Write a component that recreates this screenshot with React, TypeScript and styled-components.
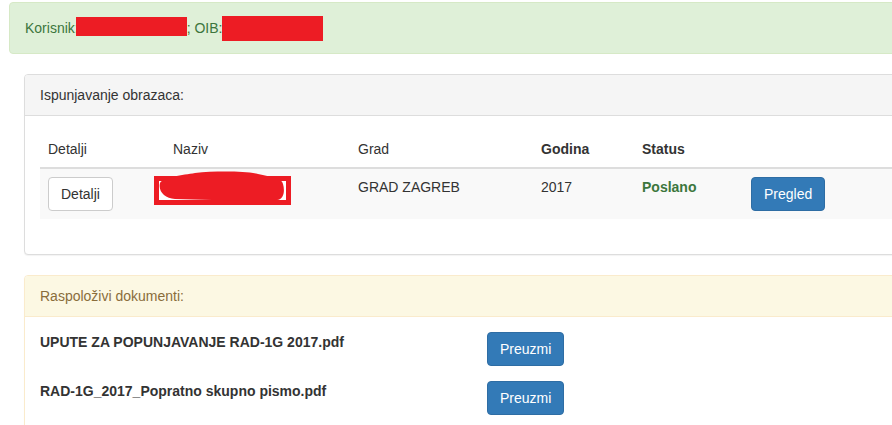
import React from 'react'
import styled, { createGlobalStyle, css } from 'styled-components'

const GlobalStyle = createGlobalStyle`
  html, body {
    overflow: hidden;
  }
  body {
    margin: 0;
    background: #ffffff;
    color: #333333;
    font-family: "Liberation Sans", Arial, Helvetica, sans-serif;
    font-size: 14px;
    line-height: 20px;
  }
  * {
    box-sizing: border-box;
  }
`

const Page = styled.div`
  width: 1200px;
  padding: 2px 0 0 9px;
`

const Alert = styled.div`
  background: #dff0d8;
  border: 1px solid #d6e9c6;
  border-radius: 4px;
  color: #3c763d;
  padding: 15px;
  margin-bottom: 20px;
`

const Redact = styled.span<{ $w: number; $h: number; $shift: number; $gap: number }>`
  display: inline-block;
  vertical-align: top;
  background: #ed1c24;
  width: ${(p) => p.$w}px;
  height: ${(p) => p.$h}px;
  margin-top: ${(p) => -p.$shift}px;
  margin-bottom: ${(p) => 20 - p.$h + p.$shift}px;
  margin-left: ${(p) => p.$gap}px;
`

const Content = styled.div`
  padding-left: 15px;
`

const Panel = styled.div<{ $variant?: 'default' | 'warning' }>`
  border: 1px solid ${(p) => (p.$variant === 'warning' ? '#faebcc' : '#dddddd')};
  border-radius: 4px;
  box-shadow: 0 1px 1px rgba(0, 0, 0, 0.05);
  margin-bottom: 20px;
  background: #ffffff;
`

const PanelHeading = styled.div<{ $variant?: 'default' | 'warning' }>`
  padding: 10px 15px;
  border-bottom: 1px solid transparent;
  border-top-left-radius: 3px;
  border-top-right-radius: 3px;
  ${(p) =>
    p.$variant === 'warning'
      ? css`
          background: #fcf8e3;
          border-color: #faebcc;
          color: #8a6d3b;
        `
      : css`
          background: #f5f5f5;
          border-color: #dddddd;
          color: #333333;
        `}
`

const PanelBody = styled.div`
  padding: 15px;
`

const Table = styled.table`
  width: 100%;
  border-collapse: collapse;
  border-spacing: 0;
  table-layout: fixed;
  margin-bottom: 20px;
`

const Th = styled.th<{ $bold?: boolean }>`
  text-align: left;
  padding: 8px;
  vertical-align: bottom;
  border-bottom: 2px solid #dddddd;
  font-weight: ${(p) => (p.$bold ? 700 : 400)};
`

const Row = styled.tr`
  &:nth-of-type(odd) {
    background: #f9f9f9;
  }
`

const Td = styled.td`
  padding: 8px;
  vertical-align: top;
  border-top: 1px solid #dddddd;
`

const StatusText = styled.span`
  color: #3c763d;
  font-weight: 700;
`

const Button = styled.button<{ $variant?: 'default' | 'primary' }>`
  display: inline-block;
  font-family: inherit;
  font-size: 14px;
  line-height: 20px;
  padding: 6px 12px;
  border-radius: 4px;
  border: 1px solid;
  cursor: pointer;
  ${(p) =>
    p.$variant === 'primary'
      ? css`
          background: #337ab7;
          border-color: #2e6da4;
          color: #ffffff;
        `
      : css`
          background: #ffffff;
          border-color: #cccccc;
          color: #333333;
        `}
`

const Scribble = styled.svg`
  display: block;
  margin: -11px 0 -7px -28px;
`

const DocRow = styled.div`
  display: grid;
  grid-template-columns: 447px auto;
  align-items: start;
  margin-bottom: 15px;
`

const DocName = styled.div`
  font-weight: 700;
`

// hand-drawn redaction over the form name
const NameRedaction = () => (
  <Scribble width="155" height="50" viewBox="0 0 155 50">
    <rect x="11.5" y="12.5" width="132" height="24" fill="#ffffff" stroke="#ed1c24" strokeWidth="5" />
    <path
      d="M15,17 C18,11 38,9 50,7 C70,5 100,5 113,8 C126,11 137,12 138,18 C140,25 139,33 132,34 C110,35 60,34 30,33 C20,32 13,26 15,17 Z"
      fill="#ed1c24"
    />
  </Scribble>
)

const docs = ['UPUTE ZA POPUNJAVANJE RAD-1G 2017.pdf', 'RAD-1G_2017_Popratno skupno pismo.pdf']

const App = () => {
  return (
    <Page>
      <GlobalStyle />
      <Alert>
        Korisnik:
        <Redact $w={111} $h={19} $shift={1} $gap={-3} />; OIB:
        <Redact $w={101} $h={25} $shift={2} $gap={0} />
      </Alert>
      <Content>
        <Panel>
          <PanelHeading>Ispunjavanje obrazaca:</PanelHeading>
          <PanelBody>
            <Table>
              <colgroup>
                <col style={{ width: 125 }} />
                <col style={{ width: 185 }} />
                <col style={{ width: 183 }} />
                <col style={{ width: 101 }} />
                <col style={{ width: 109 }} />
                <col />
              </colgroup>
              <thead>
                <tr>
                  <Th>Detalji</Th>
                  <Th>Naziv</Th>
                  <Th>Grad</Th>
                  <Th $bold>Godina</Th>
                  <Th $bold>Status</Th>
                  <Th />
                </tr>
              </thead>
              <tbody>
                <Row>
                  <Td>
                    <Button>Detalji</Button>
                  </Td>
                  <Td>
                    <NameRedaction />
                  </Td>
                  <Td>GRAD ZAGREB</Td>
                  <Td>2017</Td>
                  <Td>
                    <StatusText>Poslano</StatusText>
                  </Td>
                  <Td>
                    <Button $variant="primary">Pregled</Button>
                  </Td>
                </Row>
              </tbody>
            </Table>
          </PanelBody>
        </Panel>
        <Panel $variant="warning">
          <PanelHeading $variant="warning">Raspoloživi dokumenti:</PanelHeading>
          <PanelBody>
            {docs.map((d) => (
              <DocRow key={d}>
                <DocName>{d}</DocName>
                <div>
                  <Button $variant="primary">Preuzmi</Button>
                </div>
              </DocRow>
            ))}
          </PanelBody>
        </Panel>
      </Content>
    </Page>
  )
}

export default App
